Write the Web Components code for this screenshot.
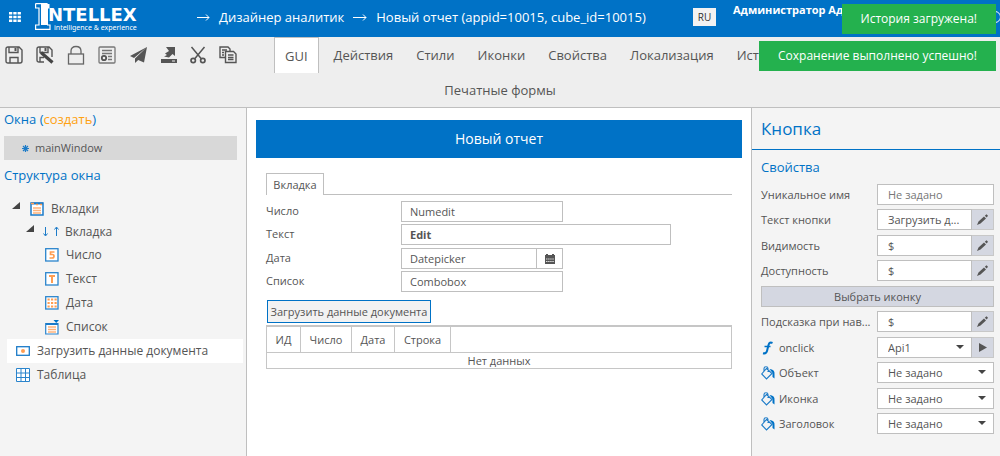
<!DOCTYPE html>
<html lang="ru">
<head>
<meta charset="utf-8">
<title>Intellex — Дизайнер аналитик</title>
<style>
  html, body { margin: 0; min-height: 100vh; }
  body {
    --blue: #0072c6; --line: #bfbfbf; --panel: #f4f4f4; --ink: #555; --green: #24b14e;
    font: 11px/16px "Open Sans", sans-serif; color: var(--ink); background: #fff;
    display: flex;
  }
</style>
</head>
<body>
<designer-app></designer-app>

<script>
const define = (name, html, setup) => customElements.define(name, class extends HTMLElement {
  constructor() {
    super();
    const t = document.createElement('template');
    t.innerHTML = typeof html === 'function' ? html(this) : html;
    this.attachShadow({ mode: 'open' }).append(t.content.cloneNode(true));
    if (setup) setup(this);
  }
});

const ICONS = {
  save: '<svg width="18" height="18" viewBox="0 0 18 18" fill="none" stroke="#555" stroke-width="1.4"><path d="M1 3Q1 1 3 1H14L17 4V15Q17 17 15 17H3Q1 17 1 15ZM4 1V6.500H13V1M5 17V11.500H13V17"/><path d="M10.500 2V5" stroke-width="2"/></svg>',
  saveAs: '<svg width="18" height="18" viewBox="0 0 18 18" fill="none" stroke="#555" stroke-width="1.4"><path d="M8 16H3Q1 16 1 14V3Q1 1 3 1H13L16 4V11M4 1V6.500H12V1M4 16V11.500H8"/><path d="M9.500 2V5" stroke-width="2"/><path d="M5 6.500L16.500 16.500" stroke="#444" stroke-width="3.200"/></svg>',
  lock: '<svg width="18" height="20" viewBox="0 0 18 20" fill="none" stroke="#666" stroke-width="1.300"><rect x="1.500" y="9" width="15" height="10"/><path d="M4 9V6Q4 1.500 9 1.500T14 6V9"/></svg>',
  cert: '<svg width="18" height="18" viewBox="0 0 18 18" fill="none" stroke="#777" stroke-width="1.300"><rect x="1" y="1" width="16" height="16" rx="1"/><path d="M4 4.500H14M4 7.500H14M10 10.500H14M10 13.500H14"/><circle cx="6" cy="12" r="2.200" stroke="#555" stroke-width="1.800"/></svg>',
  send: '<svg width="18" height="18" viewBox="0 0 18 18" fill="#555"><path d="M17 1L0 10L4 12ZM17 1L5 12.500V17L8.200 14L14 16.500Z"/></svg>',
  upload: '<svg width="16" height="18" viewBox="0 0 16 18" fill="#555"><path d="M5 1H14V10L11.500 8L8 11.500L3 10.500L6 9L4 7.500L8 5Z"/><rect y="13" width="16" height="4"/><rect x="11" y="14.500" width="3" height="1" fill="#eee"/></svg>',
  cut: '<svg width="16" height="18" viewBox="0 0 16 18" fill="none" stroke="#555"><path d="M1.500 1L11.500 13M14.500 1L4.500 13" stroke-width="1.500"/><circle cx="3.200" cy="14.500" r="2.200" stroke-width="1.700"/><circle cx="12.800" cy="14.500" r="2.200" stroke-width="1.700"/></svg>',
  copy: '<svg width="18" height="18" viewBox="0 0 18 18" fill="none" stroke="#555" stroke-width="1.400"><path d="M6 11.500H1V1H9L11 3V5M3 4H8M3 6.500H5M3 9H5"/><path d="M6.500 5.500H14.500L17 8V16.500H6.500Z" fill="#eee"/><path d="M9 9H14.500M9 11.500H14.500M9 13.500H14.500"/></svg>',
  tabs: '<svg width="14" height="14" viewBox="0 0 14 14"><rect x="1" y="1" width="12" height="12" fill="#fff" stroke="#1c7bc8" stroke-width="1.500"/><path d="M1 1.500H13" stroke="#1c7bc8" stroke-width="2"/><path d="M1 1.500H4M6 2.500H8M10 2.500H12" stroke="#ff9d52" stroke-width="1.500"/><path d="M3 6H11M3 8.500H11M3 11H11" stroke="#ffb27a" stroke-width="1.300"/></svg>',
  arrows: '<svg width="17" height="12" viewBox="0 0 17 12" fill="none" stroke="#1c7bc8"><path d="M3.500 1V9.500M1.500 7.500L3.500 10L5.500 7.500M14.500 10V1.500M12.500 3.500L14.500 1L16.500 3.500"/></svg>',
  num: '<svg width="14" height="14" viewBox="0 0 14 14"><rect x=".700" y=".700" width="12.300" height="12.300" fill="#fff" stroke="#2a84cc" stroke-width="1.300"/><path d="M9.500 4H5.500V6.500H7.500Q9 6.500 9 8.200T7 10H4.500" fill="none" stroke="#ff9d52" stroke-width="1.700"/></svg>',
  text: '<svg width="14" height="14" viewBox="0 0 14 14"><rect x=".700" y=".700" width="12.300" height="12.300" fill="#fff" stroke="#2a84cc" stroke-width="1.300"/><path d="M4 4H10M7 4V11" fill="none" stroke="#ff9d52" stroke-width="2"/></svg>',
  date: '<svg width="14" height="14" viewBox="0 0 14 14"><rect x=".700" y=".700" width="12.300" height="12.300" fill="#fff" stroke="#2a84cc" stroke-width="1.300"/><path d="M2.500 3.500H12M2.500 7H12M2.500 10.500H12" fill="none" stroke="#ff9d52" stroke-width="2" stroke-dasharray="2.200 1.300"/></svg>',
  list: '<svg width="14" height="15" viewBox="0 0 14 15"><path d="M.700 3.500H13V14H.700Z" fill="#fff" stroke="#2a84cc" stroke-width="1.200"/><path d="M1 4H13" stroke="#1c7bc8" stroke-width="2"/><path d="M8.500 0H14L11.200 3Z" fill="#0072c6"/><path d="M3 7H11M3 9.500H11M3 12H11" stroke="#ffb27a" stroke-width="1.500"/></svg>',
  button: '<svg width="14" height="10" viewBox="0 0 14 10"><rect x=".700" y=".700" width="12.600" height="8.600" fill="#fff" stroke="#1c7bc8" stroke-width="1.300"/><circle cx="7" cy="5" r="2" fill="#ff9d52"/></svg>',
  grid: '<svg width="14" height="14" viewBox="0 0 14 14" fill="none" stroke="#2a84cc"><path d="M.500.500H13.500V13.500H.500Z" fill="#fff"/><path d="M5 .500V13.500M9.500.500V13.500M.500 5H13.500M.500 9.500H13.500"/></svg>',
  func: '<svg width="14" height="14" viewBox="0 0 14 14" fill="none" stroke="#0072c6"><path d="M11.500 2Q8.500.500 7.500 4L6 10Q5.200 13 2 12.200" stroke-width="2"/><path d="M3.500 5.500H9.500" stroke-width="1.500"/></svg>',
  bucket: '<svg width="14" height="14" viewBox="0 0 14 14" fill="none" stroke="#1c7bc8" stroke-width="1.100"><path d="M5.500 2.500L11 7.500L5.500 13L.700 8ZM3 5V2.500Q3 .700 5 .700T7 2.500V6"/><path d="M8.500 3Q14 3.500 13.500 8V12.500L11.500 11V7Z" fill="#0072c6" stroke="none"/></svg>',
  pencil: '<svg width="11" height="11" viewBox="0 0 11 11" fill="#555"><path d="M0 11L1.500 7.500L7 2.500L9 4.500L3.500 9.500ZM7.800 1.800L9.500.300L11 1.800L9.700 3.600Z"/></svg>',
  play: '<svg width="8" height="9" viewBox="0 0 8 9" fill="#555"><path d="M0 0L8 4.500L0 9Z"/></svg>',
  calendar: '<svg width="10" height="10" viewBox="0 0 10 10" fill="#555"><path d="M0 1H1V0H3V1H7V0H9V1H10V10H0Z"/><path d="M1 5H9M1 7.500H9" stroke="#fff" stroke-width=".800" stroke-dasharray="1.500 .600"/></svg>',
  caret: '<svg width="8" height="4" viewBox="0 0 8 4" fill="#444"><path d="M0 0H8L4 4Z"/></svg>',
  open: '<svg width="8" height="7" viewBox="0 0 8 7" fill="#444"><path d="M8 0V7H0Z"/></svg>'
};

define('ui-icon', el => `<style>:host{display:inline-flex;align-items:center;justify-content:center;flex:none} svg{display:block}</style>${ICONS[el.getAttribute('name')]}`);

define('brand-logo', `<style>
  :host{display:grid;grid-template-columns:13px auto;height:33px;align-items:start;color:#fff}
  .mark{margin-top:3px;display:block}
  .words{display:flex;flex-direction:column}
  b{font:700 18px/20px "DejaVu Sans",sans-serif;margin-top:5px}
  small{font:7px/6px "Noto Sans",sans-serif;margin-left:6px}
  </style>
  <svg class="mark" width="16" height="27" viewBox="0 0 16 27" fill="none" stroke="#fff"><path d="M.600.600H12V5.500M.600.600V5H4V22H.600V26.400H15V22H12" stroke-width="1.200"/><path d="M6 1V26M6 1H14.500V5.500H13V22H6Z" fill="#fff" stroke="none"/></svg>
  <span class="words"><b>NTELLEX</b><small>intelligence &amp; experience</small></span>`);

define('app-header', `<style>
  :host{display:grid;grid-template-columns:197px 1fr auto 268px;height:37px;background:var(--blue);color:#fff;align-items:start}
  .left{display:flex;gap:14px;padding-left:9px}
  button{border:0;font:inherit;padding:0;cursor:pointer}
  .apps{background:none;margin-top:12px;height:10px}
  .apps svg{display:block}
  nav{display:flex;gap:9px;font-size:13px;line-height:20px;font-weight:500;align-items:center;margin-top:7px;white-space:nowrap}
  nav svg{display:block}
  a{color:#fff;text-decoration:none}
  .lang{background:#f2f2f2;color:#333;width:23px;height:18px;font-size:10px;line-height:18px;margin:8px 16px 0 0}
  .user{display:flex;justify-content:space-between;height:37px;overflow:hidden;white-space:nowrap;padding-left:1px}
  .user b{line-height:20px}
  .user svg{flex:none;margin-top:11px;margin-right:-1px}
  </style>
  <div class="left"><button class="apps" aria-label="Меню"><svg width="12" height="10" viewBox="0 0 12 10" stroke="#fff" stroke-width="2.600" stroke-dasharray="3.300 1"><path d="M0 1.300H12M0 5H12M0 8.700H12"/></svg></button><brand-logo></brand-logo></div>
  <nav>
    <svg width="13" height="7" viewBox="0 0 13 7" fill="none" stroke="#fff"><path d="M0 3.500H12M9 .500L12 3.500L9 6.500"/></svg>
    <a href="#analyst">Дизайнер аналитик</a>
    <svg width="14" height="7" viewBox="0 0 14 7" fill="none" stroke="#fff"><path d="M0 3.500H13M10 .500L13 3.500L10 6.500"/></svg>
    <a href="#report">Новый отчет (appid=10015, cube_id=10015)</a>
  </nav>
  <button class="lang">RU</button>
  <div class="user"><b>Администратор Адм.</b><svg width="12" height="12" fill="none" stroke="#fff"><circle cx="6" cy="6" r="5.500"/></svg></div>`);

define('tool-bar', `<style>
  :host{display:block;background:#eee;border-bottom:1px solid var(--line)}
  .row{display:flex;height:36px}
  .tools{display:flex;justify-content:space-between;width:232px;padding-left:5px;margin-right:37px}
  button{border:0;background:none;padding:0;font:inherit;color:inherit;cursor:pointer}
  .tools button{height:35px;display:flex;align-items:center}
  .tabs{display:flex;gap:3px}
  .tabs button{font-size:13px;line-height:20px;padding:0 10px;white-space:nowrap}
  .tabs .on{background:#fff;border:1px solid var(--line);border-bottom:0;margin-right:2px}
  .second{justify-content:center;height:34px}
  </style>
  <div class="row"><div class="tools">${[['save','Сохранить'],['saveAs','Сохранить как'],['lock','Блокировка'],['cert','Права'],['send','Отправить'],['upload','Выгрузить'],['cut','Вырезать'],['copy','Копировать']].map(([i, l]) => `<button aria-label="${l}"><ui-icon name="${i}"></ui-icon></button>`).join('')}</div>
  <div class="tabs"><button class="on">GUI</button>${['Действия','Стили','Иконки','Свойства','Локализация','История'].map(t => `<button>${t}</button>`).join('')}</div></div>
  <div class="row second tabs"><button>Печатные формы</button></div>`);

define('tree-item', el => `<style>
  :host{display:flex;align-items:center;height:24px;margin:0 3px 0 7px;font-size:12px;line-height:18px}
  :host([open]){height:23px}
  :host([level="1"]){padding-left:5px}
  :host([level="2"]){padding-left:19px}
  :host([level="3"]){padding-left:38px}
  :host([selected]){background:#fff}
  .toggle{margin-bottom:6px;margin-right:10px}
  .glyph{margin-right:7px}
  :host([level="0"]) .glyph{margin-left:9px}
  :host([level="2"]) .toggle{margin-right:8px}
  :host([level="2"]) .glyph{margin-right:6px}
  </style>${el.hasAttribute('open') ? '<ui-icon class="toggle" name="open"></ui-icon>' : ''}<ui-icon class="glyph" name="${el.getAttribute('icon')}"></ui-icon><slot></slot>`);

define('window-panel', `<style>
  :host{display:block;background:var(--panel);border-right:1px solid var(--line);padding-top:1px}
  h2{margin:0;font-size:13px;line-height:20px;font-weight:400;color:var(--blue);padding-left:4px}
  a{color:#ffa110;text-decoration:none}
  .win{display:flex;align-items:center;gap:6px;width:233px;height:24px;box-sizing:border-box;margin:7px 0 5px 4px;padding:0 0 0 18px;background:#d8d8d8;border:0;font:inherit;color:inherit;cursor:pointer}
  .tree{margin-top:12px}
  </style>
  <h2>Окна (<a href="#create">создать</a>)</h2>
  <button class="win"><svg width="7" height="7" viewBox="0 0 7 7" stroke="#1c7bc8" stroke-width="1.200"><path d="M3.500 0V7M0 3.500H7M1 1L6 6M6 1L1 6"/></svg>mainWindow</button>
  <h2>Структура окна</h2>
  <div class="tree">
    <tree-item level="1" icon="tabs" open>Вкладки</tree-item>
    <tree-item level="2" icon="arrows" open>Вкладка</tree-item>
    <tree-item level="3" icon="num">Число</tree-item>
    <tree-item level="3" icon="text">Текст</tree-item>
    <tree-item level="3" icon="date">Дата</tree-item>
    <tree-item level="3" icon="list">Список</tree-item>
    <tree-item level="0" icon="button" selected>Загрузить данные документа</tree-item>
    <tree-item level="0" icon="grid">Таблица</tree-item>
  </div>`);

define('form-preview', `<style>
  :host{display:block;padding:12px 9px;min-width:0}
  h1{margin:0;background:var(--blue);color:#fff;font-size:14px;line-height:38px;font-weight:400;text-align:center}
  .body{padding:15px 10px 0}
  .tabs{display:flex;border-bottom:1px solid var(--line)}
  .tabs button{height:22px;margin-bottom:-1px;width:58px;border:1px solid var(--line);border-bottom:0;background:#fff;padding:0;font:inherit;line-height:20px;color:inherit}
  .fields{display:grid;grid-template-columns:135px 1fr;grid-auto-rows:23px 24px;margin-top:6px;align-items:start}
  label{line-height:20px}
  input{box-sizing:border-box;width:162px;height:21px;border:1px solid var(--line);background:#fff;font:inherit;color:inherit;padding:0 8px;min-width:0}
  .wide{width:270px;font-weight:700}
  .date{display:flex;width:162px}
  .date input{flex:1}
  .date button{width:27px;height:21px;border:1px solid var(--line);margin-left:-1px;background:#fff;padding:0;display:flex;align-items:center;justify-content:center}
  .load{display:block;height:23px;width:164px;margin:5px 0 2px 1px;border:1px solid var(--blue);background:#f2f2f2;font:inherit;color:inherit;padding:0;white-space:nowrap}
  table{width:100%;border-collapse:collapse;table-layout:fixed}
  td,th{border:1px solid #c6c6c6;padding:0;font-weight:400;text-align:center}
  th{height:25px;border-top-width:2px}
  td{height:15px;line-height:15px}
  </style>
  <h1>Новый отчет</h1>
  <div class="body">
    <div class="tabs"><button>Вкладка</button></div>
    <div class="fields">
      <label for="n">Число</label><input id="n" value="Numedit">
      <label for="t">Текст</label><input id="t" class="wide" value="Edit">
      <label for="d">Дата</label><span class="date"><input id="d" value="Datepicker"><button aria-label="Календарь"><ui-icon name="calendar"></ui-icon></button></span>
      <label for="c">Список</label><input id="c" role="combobox" aria-expanded="false" value="Combobox">
    </div>
    <button class="load">Загрузить данные документа</button>
    <table><colgroup><col style="width:34px"><col style="width:51px"><col style="width:43px"><col style="width:56px"><col></colgroup>
      <thead><tr><th>ИД</th><th>Число</th><th>Дата</th><th>Строка</th><th></th></tr></thead>
      <tbody><tr><td colspan="5">Нет данных</td></tr></tbody></table>
  </div>`);

/* One property: label on the left, control on the right. kind = text | edit | run | select */
define('property-row', el => {
  const kind = el.getAttribute('kind'), value = el.getAttribute('value'), icon = el.getAttribute('icon');
  const select = kind === 'run' || kind === 'select';
  return `<style>
  :host{display:grid;grid-template-columns:116px 1fr;height:21px;align-items:center}
  label{display:flex;align-items:center;gap:4px;white-space:nowrap}
  .box{display:flex;min-width:0}
  .field{position:relative;flex:1;min-width:0;display:flex}
  input,select{box-sizing:border-box;width:100%;height:21px;border:1px solid var(--line);border-radius:0;background:#fff;font:inherit;color:inherit;padding:0 10px;appearance:none;min-width:0}
  input::placeholder{color:#777;opacity:1}
  .caret{position:absolute;right:8px;top:8px;pointer-events:none}
  button{width:22px;height:21px;box-sizing:border-box;border:1px solid #c8c8c8;border-left:0;background:#d4d7e1;padding:0;display:flex;align-items:center;justify-content:center}
  </style>
  <label for="f">${icon ? `<ui-icon name="${icon}"></ui-icon>` : ''}${el.getAttribute('label')}</label>
  <div class="box"><span class="field">${select
    ? `<select id="f"><option>${value}</option></select><ui-icon class="caret" name="caret"></ui-icon>`
    : kind === 'text' ? `<input id="f" placeholder="${value}">` : `<input id="f" value="${value}">`}</span>${
    kind === 'edit' ? '<button aria-label="Изменить"><ui-icon name="pencil"></ui-icon></button>'
    : kind === 'run' ? '<button aria-label="Выполнить"><ui-icon name="play"></ui-icon></button>' : ''}</div>`;
});

define('property-panel', `<style>
  :host{display:block;background:var(--panel);border-left:1px solid var(--line)}
  h2{margin:0;font-size:17px;line-height:41px;font-weight:400;color:var(--blue);padding-left:9px;border-bottom:1px solid var(--blue)}
  h3{margin:0;font-size:13px;line-height:34px;font-weight:400;color:var(--blue);padding-left:9px}
  .rows{display:grid;grid-auto-rows:25px 26px;align-items:start;padding:0 6px 0 9px}
  .pick{height:21px;border:1px solid var(--line);background:#d4d7e1;font:inherit;color:inherit;padding:0}
  </style>
  <h2>Кнопка</h2><h3>Свойства</h3>
  <div class="rows">
    <property-row kind="text" label="Уникальное имя" value="Не задано"></property-row>
    <property-row kind="edit" label="Текст кнопки" value="Загрузить д..."></property-row>
    <property-row kind="edit" label="Видимость" value="$"></property-row>
    <property-row kind="edit" label="Доступность" value="$"></property-row>
    <button class="pick">Выбрать иконку</button>
    <property-row kind="edit" label="Подсказка при нав..." value="$"></property-row>
    <property-row kind="run" icon="func" label="onclick" value="Api1"></property-row>
    <property-row kind="select" icon="bucket" label="Объект" value="Не задано"></property-row>
    <property-row kind="select" icon="bucket" label="Иконка" value="Не задано"></property-row>
    <property-row kind="select" icon="bucket" label="Заголовок" value="Не задано"></property-row>
  </div>`);

define('toast-message', `<style>:host{display:block;background:var(--green);color:#fff;font-size:12px;line-height:30px;padding:0 19px;white-space:nowrap}</style><slot></slot>`);

define('designer-app', `<style>
  :host{display:flex;flex-direction:column;flex:1;min-width:0;position:relative;overflow:hidden}
  main{flex:1;display:grid;grid-template-columns:247px 1fr 249px}
  .toasts{position:absolute;top:4px;right:4px;display:flex;flex-direction:column;align-items:flex-end;gap:7px}
  </style>
  <app-header></app-header>
  <tool-bar></tool-bar>
  <main><window-panel></window-panel><form-preview></form-preview><property-panel></property-panel></main>
  <div class="toasts" role="status"><toast-message>История загружена!</toast-message><toast-message>Сохранение выполнено успешно!</toast-message></div>`);
</script>
</body>
</html>
